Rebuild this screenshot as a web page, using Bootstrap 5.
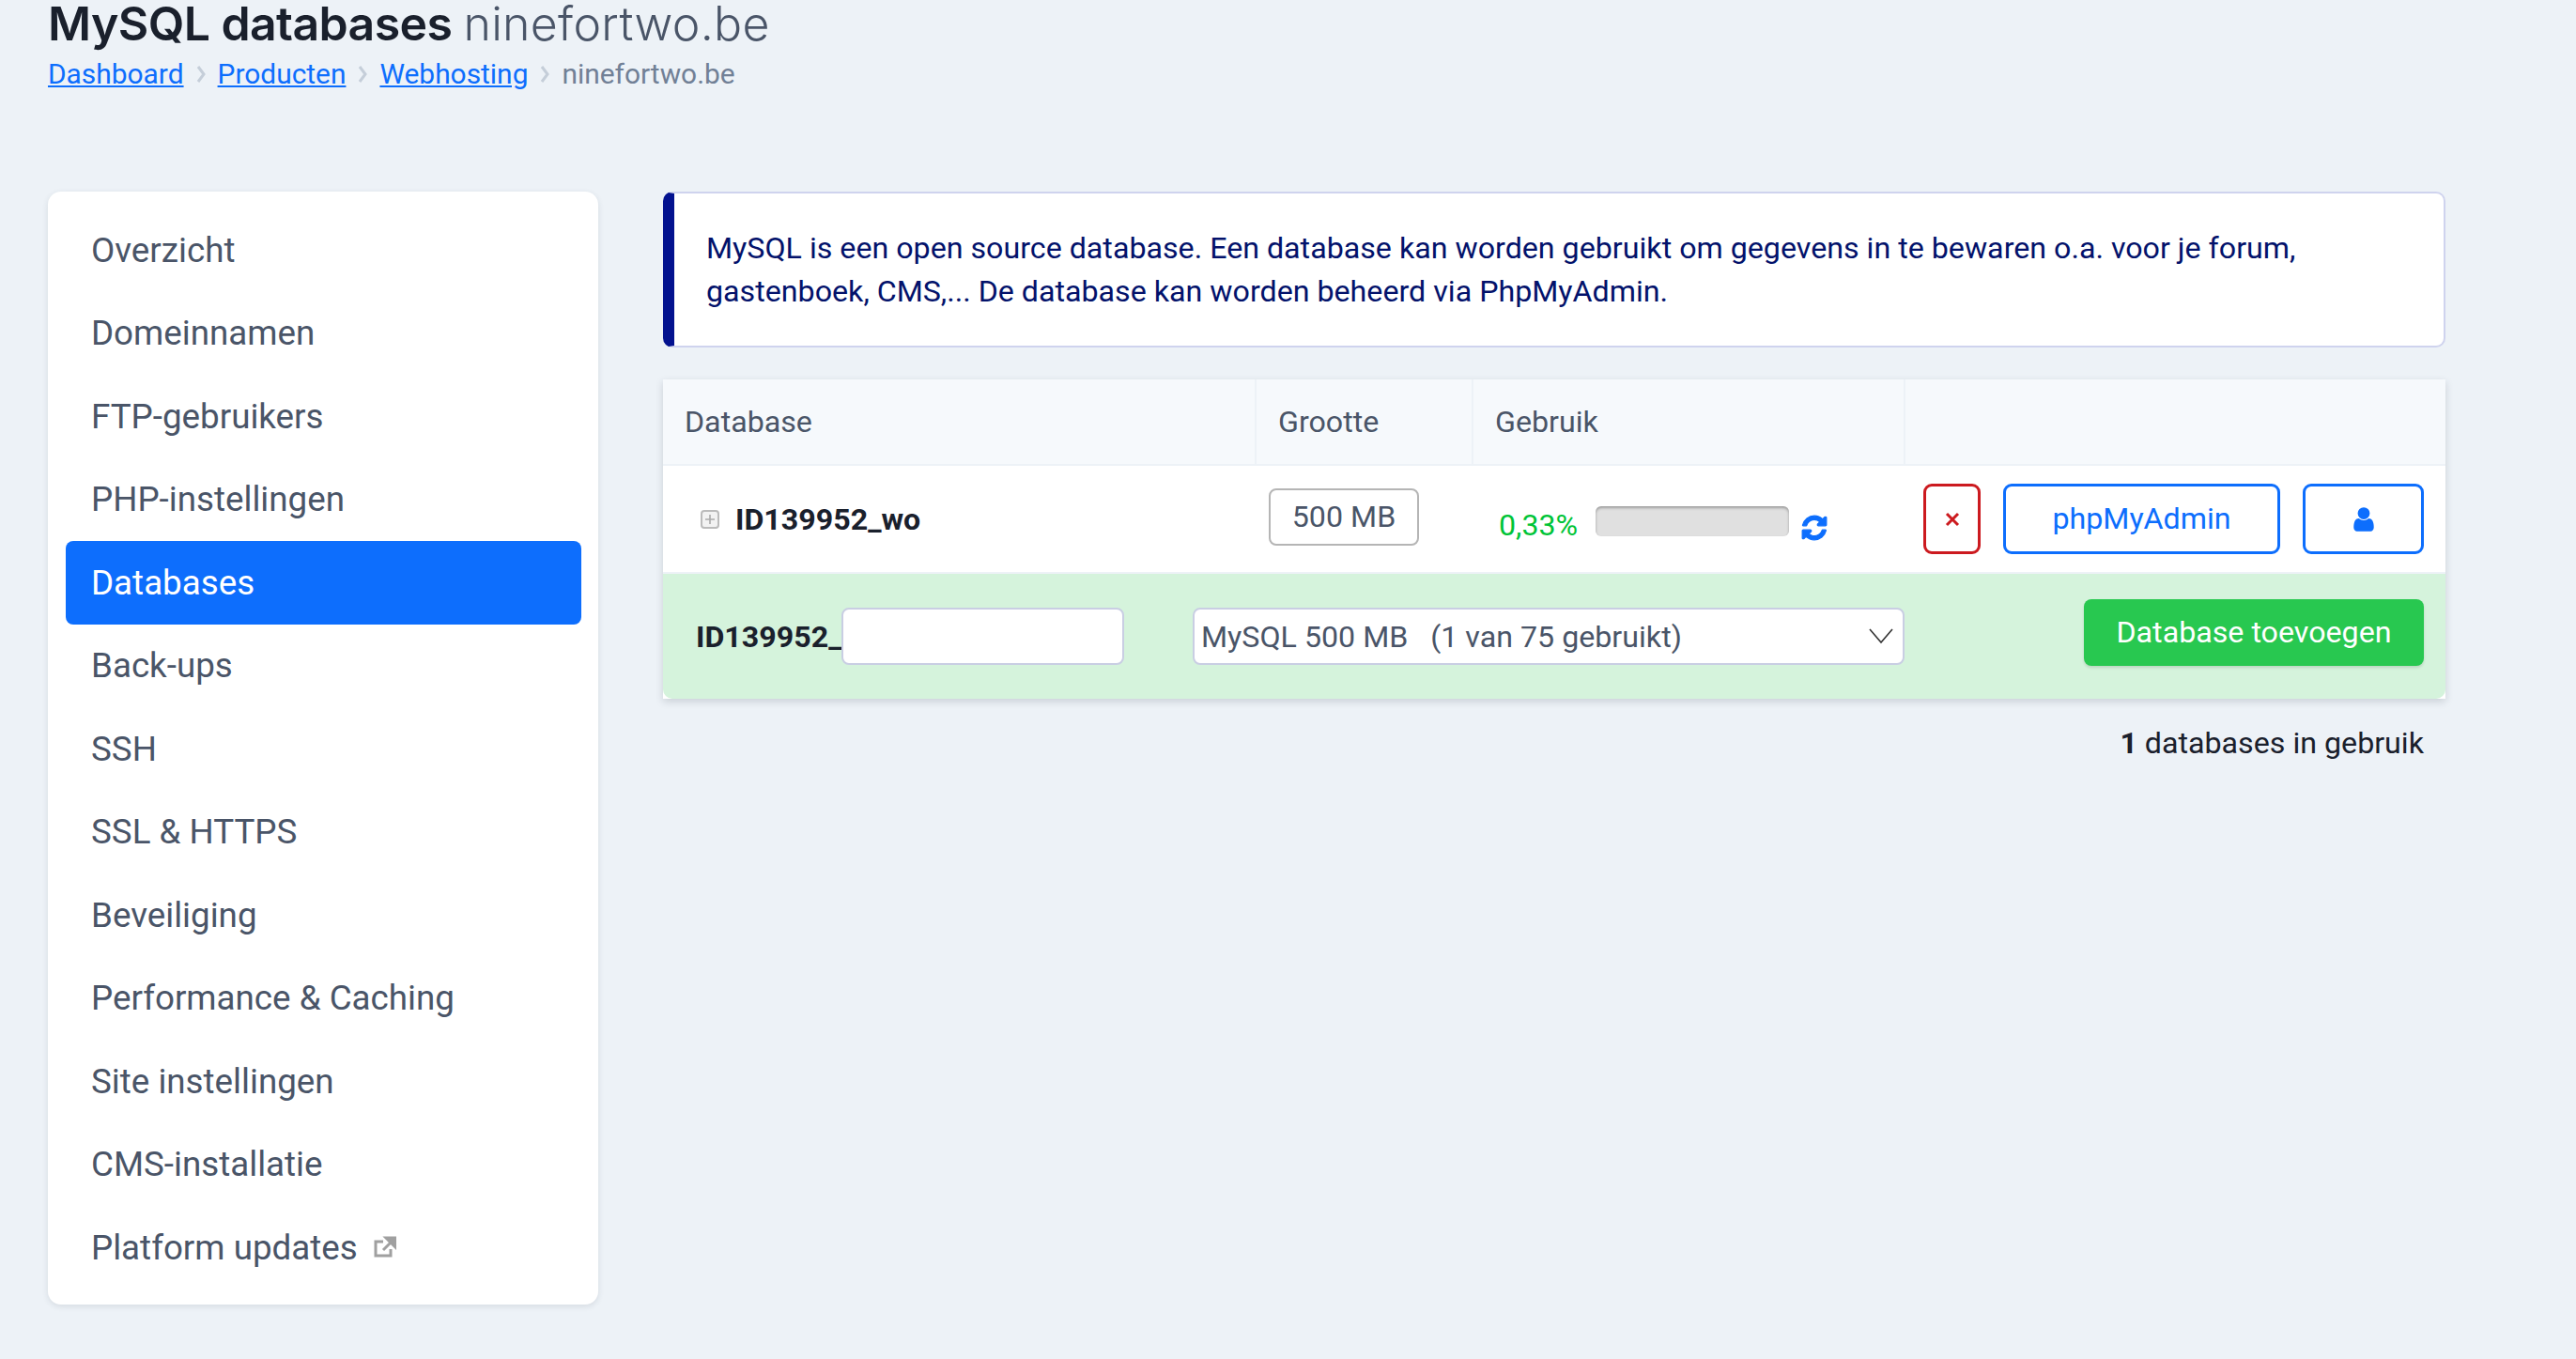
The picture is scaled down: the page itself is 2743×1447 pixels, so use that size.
<!doctype html>
<html lang="nl"><head><meta charset="utf-8"><title>MySQL databases</title>
<link href="https://cdn.jsdelivr.net/npm/bootstrap@5.3.0/dist/css/bootstrap.min.css" rel="stylesheet">
<style>
html,body{height:100%}
body{background:#edf2f7;font-family:Roboto,sans-serif;font-size:32.2px;color:#1a202c;overflow:hidden}
.pagehead{padding:0 0 0 51px;height:204px}
.pagetitle{font-family:Inter,sans-serif;font-size:50px;line-height:50px;margin:0;font-weight:600;color:#1a202c;letter-spacing:-.6px}
.pagetitle span{font-weight:300;color:#4a5568;letter-spacing:.3px}
.crumbs{margin:0;padding:0;list-style:none;font-size:29.9px;line-height:44px;margin-top:7px;color:#718096;gap:13px}
.crumbs a{color:#0d6efd}
.crumbs svg{width:10px;height:20px;display:block}
.shell{padding-left:51px;gap:69px}
.sidemenu{width:586px;height:1185px;background:#fff;border-radius:14px;box-shadow:0 2px 6px rgba(45,55,72,.12);padding:18px 18px 18px 19px;flex:none}
.sidemenu a{display:flex;align-items:center;height:88.5px;padding:0 27px;color:#4a5568;text-decoration:none;font-size:36.75px;border-radius:8px}
.sidemenu a.on{background:#0d6efd;color:#fff}
.sidemenu svg{width:24px;height:24px;margin-left:17px}
.contentcol{width:1898px;flex:none}
.infobox{height:166px;background:#fff;border:2px solid #cfd3ee;border-left:12px solid #03128f;border-radius:10px;padding:0 34px;color:#03126b;line-height:46px;margin:0 0 34px;display:flex;align-items:center}
.dbbox{box-shadow:0 3px 8px rgba(45,55,72,.18);background:#fff}
.dbtable{margin:0;table-layout:fixed;width:100%;border-collapse:collapse}
.dbtable th{height:91px;background:#f6f9fc;font-weight:400;color:#4a5568;font-size:32.2px;padding:0 0 0 23px;border:0;border-right:2px solid #edf2f7;border-bottom:2px solid #edf2f7;vertical-align:middle}
.dbtable th:last-child{border-right:0}
.dbtable td{height:115px;border:0;border-bottom:2px solid #edf2f7;padding:0;vertical-align:middle;background:#fff}
.dbname{padding:2px 0 0 40px;gap:17px;font-weight:700;color:#1a202c}
.dbname svg{width:20px;height:20px}
.sizebox{display:inline-block;width:160px;height:61px;line-height:57px;text-align:center;border:2px solid #b5b5b5;border-radius:8px;margin-left:14px;color:#4a5568;margin-top:-4px}
.usage{padding-left:28px;gap:20px;padding-top:6px}
.pct{color:#00c437;width:83px;padding-top:8px}
.usebar{width:206px;height:32px;background:#e0e0e0;border-radius:6px;box-shadow:inset 0 2px 3px rgba(0,0,0,.3)}
.usage svg{width:30px;height:30px;margin-left:-8px;margin-top:14px}
.acts{padding-left:20px;gap:24px;height:75px}
.actbtn{display:flex;align-items:center;justify-content:center;height:75px;background:#fff;border:3px solid #0d6efd;color:#0d6efd;border-radius:9px;padding:0}
.actdel{width:61px;border-color:#cc1a1f;color:#cc1a1f}
.actphp{width:295px}
.actuser{width:129px}
.actuser svg{width:30px;height:30px}
.addrow{height:133px;background:#d5f3dc;border-radius:0 0 10px 10px;padding-left:35px}
.addrow b{width:155px;flex:none;color:#1a202c;padding-top:2px}
.fieldbox{height:61px;background:#fff;border:2px solid #c9cee3;border-radius:8px;flex:none;color:#4a5568;margin-top:-1px}
.namefield{width:301px;margin-right:73px}
.planfield{width:758px;padding:0 7px;position:relative;line-height:58px;white-space:pre}
.planfield svg{position:absolute;right:9px;top:18px;width:28px;height:22px}
.addbtn{width:362px;height:71px;margin-left:191px;background:#28c850;border:0;border-radius:8px;color:#fff;padding:0;margin-top:-8px;box-shadow:0 2px 3px rgba(0,0,0,.12)}
.dbcount{text-align:right;padding:23px 23px 0 0;color:#1a202c}
</style></head><body>
<header class="pagehead">
<h1 class="pagetitle">MySQL databases <span>ninefortwo.be</span></h1>
<ul class="crumbs d-flex align-items-center">
<li><a href="#">Dashboard</a></li><li><svg viewBox="0 0 10 20"><path d="M2 2l6 8-6 8" fill="none" stroke="#c5ced9" stroke-width="3"/></svg></li>
<li><a href="#">Producten</a></li><li><svg viewBox="0 0 10 20"><path d="M2 2l6 8-6 8" fill="none" stroke="#c5ced9" stroke-width="3"/></svg></li>
<li><a href="#">Webhosting</a></li><li><svg viewBox="0 0 10 20"><path d="M2 2l6 8-6 8" fill="none" stroke="#c5ced9" stroke-width="3"/></svg></li>
<li>ninefortwo.be</li>
</ul>
</header>
<div class="shell d-flex align-items-start">
<nav class="sidemenu">
<a href="#">Overzicht</a><a href="#">Domeinnamen</a><a href="#">FTP-gebruikers</a><a href="#">PHP-instellingen</a><a href="#" class="on">Databases</a><a href="#">Back-ups</a><a href="#">SSH</a><a href="#">SSL &amp; HTTPS</a><a href="#">Beveiliging</a><a href="#">Performance &amp; Caching</a><a href="#">Site instellingen</a><a href="#">CMS-installatie</a>
<a href="#">Platform updates<svg viewBox="0 0 24 24"><path d="M18 14v7H2V6h8" fill="none" stroke="#a0a0a0" stroke-width="3"/><path d="M10 15L20 5M13 2h10v10z" fill="#a0a0a0" stroke="#a0a0a0" stroke-width="3"/></svg></a>
</nav>
<main class="contentcol">
<div class="infobox"><div>MySQL is een open source database. Een database kan worden gebruikt om gegevens in te bewaren o.a. voor je forum, gastenboek, CMS,... De database kan worden beheerd via PhpMyAdmin.</div></div>
<div class="dbbox">
<table class="table dbtable">
<colgroup><col style="width:631px"><col style="width:231px"><col style="width:460px"><col></colgroup>
<thead><tr><th>Database</th><th>Grootte</th><th>Gebruik</th><th></th></tr></thead>
<tbody><tr>
<td><div class="dbname d-flex align-items-center"><svg viewBox="0 0 20 20"><rect x="1" y="1" width="18" height="18" rx="3" fill="#f2f2f2" stroke="#bbb" stroke-width="2"/><path d="M10 5v10M5 10h10" stroke="#aaa" stroke-width="1.6"/></svg>ID139952_wo</div></td>
<td><span class="sizebox">500 MB</span></td>
<td><div class="usage d-flex align-items-center"><span class="pct">0,33%</span><div class="usebar"></div><svg viewBox="0 0 1792 1792"><path fill="#0d6efd" stroke="#0d6efd" stroke-width="70" d="M1639 1056q0 5-1 7-64 268-268 434.5t-478 166.5q-146 0-282.5-55t-243.5-157l-129 129q-19 19-45 19t-45-19-19-45v-448q0-26 19-45t45-19h448q26 0 45 19t19 45-19 45l-137 137q71 66 161 102t187 36q134 0 250-65t186-179q11-17 53-117 8-23 30-23h192q13 0 22.5 9.5t9.5 22.5zm25-800v448q0 26-19 45t-45 19h-448q-26 0-45-19t-19-45 19-45l138-138q-148-137-349-137-134 0-250 65t-186 179q-11 17-53 117-8 23-30 23h-199q-13 0-22.5-9.5t-9.5-22.5v-7q65-268 270-434.5t480-166.5q146 0 284 55.5t245 156.5l130-129q19-19 45-19t45 19 19 45z"/></svg></div></td>
<td><div class="acts d-flex"><button class="actbtn actdel" type="button" aria-label="Verwijderen"><svg width="16" height="16" viewBox="0 0 16 16"><path d="M2 2l12 12M14 2L2 14" stroke="#cc1a1f" stroke-width="3"/></svg></button><button class="actbtn actphp" type="button">phpMyAdmin</button><button class="actbtn actuser" type="button" aria-label="Gebruiker"><svg viewBox="0 0 1792 1792"><path fill="#0d6efd" d="M1536 1399q0 109-62.5 187t-150.5 78h-854q-88 0-150.5-78t-62.5-187q0-85 8.5-160.5t31.5-152 58.5-131 94-89 134.5-34.5q131 128 313 128t313-128q76 0 134.5 34.5t94 89 58.5 131 31.5 152 8.5 160.5zm-256-887q0 159-112.5 271.5t-271.5 112.5-271.5-112.5-112.5-271.5 112.5-271.5 271.5-112.5 271.5 112.5 112.5 271.5z"/></svg></button></div></td>
</tr></tbody></table>
<div class="addrow d-flex align-items-center">
<b>ID139952_</b><div class="fieldbox namefield"></div>
<div class="fieldbox planfield">MySQL 500 MB   (1 van 75 gebruikt)<svg viewBox="0 0 28 22"><path d="M2 3l12 14L26 3" fill="none" stroke="#333" stroke-width="1.6"/></svg></div>
<button class="addbtn" type="button">Database toevoegen</button>
</div>
</div>
<div class="dbcount"><b>1</b> databases in gebruik</div>
</main>
</div>
<script src="https://cdn.jsdelivr.net/npm/bootstrap@5.3.0/dist/js/bootstrap.bundle.min.js"></script>
</body></html>
